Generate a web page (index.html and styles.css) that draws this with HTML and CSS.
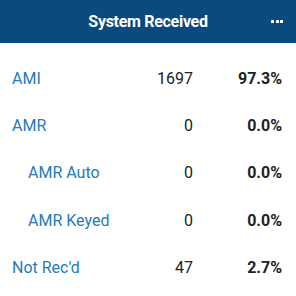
FILE: index.html
```html
<!DOCTYPE html>
<html>
<head>
<meta charset="utf-8">
<link rel="stylesheet" href="styles.css">
</head>
<body>
<div class="card">
  <div class="header">
    <span class="title">System Received</span>
    <span class="menu"><i></i><i></i><i></i></span>
  </div>
  <div class="rows">
    <div class="row"><span class="label">AMI</span><span class="num">1697</span><span class="pct">97.3%</span></div>
    <div class="row"><span class="label">AMR</span><span class="num">0</span><span class="pct">0.0%</span></div>
    <div class="row"><span class="label sub">AMR Auto</span><span class="num">0</span><span class="pct">0.0%</span></div>
    <div class="row"><span class="label sub">AMR Keyed</span><span class="num">0</span><span class="pct">0.0%</span></div>
    <div class="row"><span class="label">Not Rec'd</span><span class="num">47</span><span class="pct">2.7%</span></div>
  </div>
</div>
</body>
</html>
```
FILE: styles.css
```css
html, body {
  margin: 0;
  padding: 0;
  background: #fff;
  font-family: Roboto, "Liberation Sans", sans-serif;
}
.card {
  width: 296px;
  height: 296px;
}
.header {
  height: 43px;
  background: #0b4a7f;
  color: #fff;
  display: flex;
  align-items: center;
  justify-content: center;
  position: relative;
}
.title {
  font-weight: 700;
  font-size: 16px;
  letter-spacing: -0.3px;
}
.menu {
  position: absolute;
  right: 13px;
  top: 20px;
  display: flex;
  gap: 1.5px;
}
.menu i {
  width: 3px;
  height: 3px;
  background: #fff;
  display: block;
  border-radius: 0.5px;
}
.rows {
  padding-top: 12px;
}
.row {
  display: grid;
  grid-template-columns: 1fr 70px 89px;
  height: 47.2px;
  align-items: center;
  padding: 0 14px 0 12px;
  font-size: 16px;
  color: #222;
}
.label {
  color: #257bbb;
}
.label.sub {
  padding-left: 16px;
}
.num {
  text-align: right;
}
.pct {
  text-align: right;
  font-weight: 700;
}
```
